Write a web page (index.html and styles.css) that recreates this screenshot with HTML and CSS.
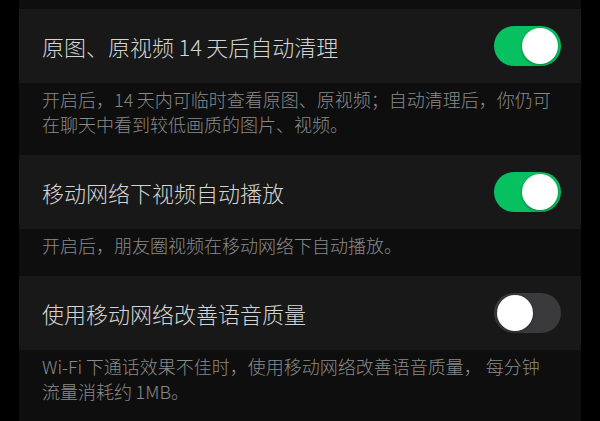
FILE: index.html
```html
<!DOCTYPE html>
<html lang="zh-CN">
<head>
  <meta charset="UTF-8" />
  <title>通用设置</title>
  <link rel="stylesheet" href="styles.css">
</head>
<body>
  <div class="screen">
    <div class="cell">
      <span class="cell-title">原图、原视频&thinsp;14&thinsp;天后自动清理</span>
      <span class="switch on"><span class="knob"></span></span>
    </div>
    <div class="desc">开启后，14&thinsp;天内可临时查看原图、原视频；自动清理后，你仍可在聊天中看到较低画质的图片、视频。</div>

    <div class="cell">
      <span class="cell-title">移动网络下视频自动播放</span>
      <span class="switch on"><span class="knob"></span></span>
    </div>
    <div class="desc">开启后，朋友圈视频在移动网络下自动播放。</div>

    <div class="cell">
      <span class="cell-title">使用移动网络改善语音质量</span>
      <span class="switch"><span class="knob"></span></span>
    </div>
    <div class="desc">Wi-Fi&thinsp;下通话效果不佳时，使用移动网络改善语音质量， 每分钟流量消耗约&thinsp;1MB。</div>
  </div>
</body>
</html>
```

FILE: styles.css
```css
html,
body {
  margin: 0;
  height: 100%;
  background-color: #000;
}

body {
  font-family: "Noto Sans CJK SC", "Noto Sans", sans-serif;
  font-weight: 300;
  overflow: hidden;
}

.screen {
  margin: 0 19px;
  padding-top: 9px;
  min-height: 100%;
  background-color: #0e0e0e;
}

.cell {
  display: flex;
  align-items: center;
  justify-content: space-between;
  height: 74px;
  padding: 0 20px 0 23px;
  background-color: #181818;
}

.cell-title {
  font-size: 22px;
  color: #d4d4d4;
}

.desc {
  padding: 4px 27px 18px 23px;
  font-size: 18px;
  line-height: 25px;
  color: #8a8a8a;
}

.switch {
  display: flex;
  width: 67px;
  height: 40px;
  padding: 2px 3px;
  box-sizing: border-box;
  border-radius: 20px;
  background-color: #3a3a3c;
  align-items: center;
}

.switch.on {
  background-color: #07c160;
  justify-content: flex-end;
}

.knob {
  width: 36px;
  height: 36px;
  border-radius: 50%;
  background-color: #fff;
  box-shadow: 0 1px 3px rgba(0, 0, 0, 0.35);
}
```
